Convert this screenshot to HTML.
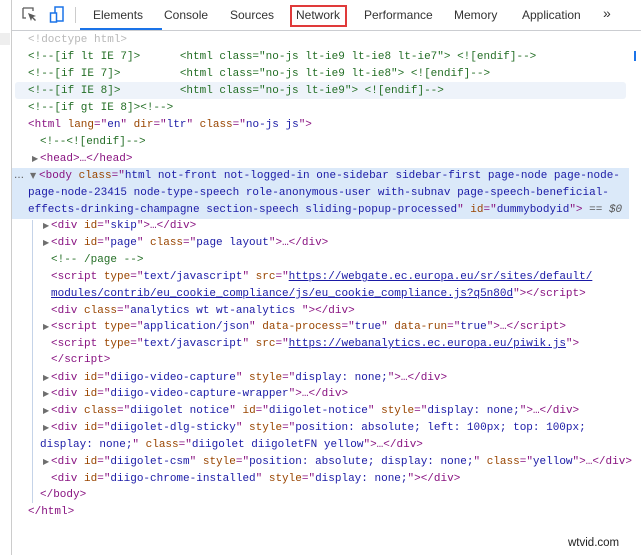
<!DOCTYPE html>
<html><head><style>
body{margin:0;width:641px;height:555px;background:#fff;overflow:hidden;position:relative;font-family:"Liberation Sans",sans-serif}
#lb{position:absolute;left:11px;top:0;width:1px;height:555px;background:#ccc}
#tb{position:absolute;left:12px;top:0;right:0;height:30px;border-bottom:1px solid #cbcdd1;background:#fff}
.tab{position:absolute;top:8px;font-size:12px;color:#333}
.l{position:absolute;white-space:pre;font-family:"Liberation Mono",monospace;font-size:11px;line-height:16px;height:17px;color:#881280}
.a{color:#994500}.v{color:#1a1aa6}.c{color:#236e25}.g{color:#b8b8b8}.u{color:#1a1aa6;text-decoration:underline}
.ar{position:absolute;font-size:8px;color:#6e6e6e;font-family:"DejaVu Sans",sans-serif;line-height:16px}
</style></head><body>
<div id="lb"></div>
<div style="position:absolute;left:0;top:33px;width:10px;height:12px;background:#eee"></div>
<div id="tb">
<svg style="position:absolute;left:10px;top:7px" width="16" height="16" viewBox="0 0 16 16"><path d="M1 1h10v3M1 1v10h3" fill="none" stroke="#5a5a5a" stroke-width="1.3"/><path d="M6 6l8 3-3 1 3 3-1 1-3-3-1 3z" fill="#5a5a5a"/></svg>
<svg style="position:absolute;left:37px;top:5px" width="16" height="20" viewBox="0 0 16 20"><rect x="6" y="2" width="8" height="14" fill="none" stroke="#1a73e8" stroke-width="1.5"/><rect x="1.5" y="8" width="6" height="9" fill="#fff" stroke="#1a73e8" stroke-width="1.5"/></svg>
<div style="position:absolute;left:63px;top:7px;width:1px;height:16px;background:#ccc"></div>
<div class="tab" style="left:81px">Elements</div>
<div style="position:absolute;left:68px;top:28px;width:82px;height:2px;background:#1a73e8"></div>
<div class="tab" style="left:152px">Console</div>
<div class="tab" style="left:218px">Sources</div>
<div style="position:absolute;left:278px;top:5px;width:57px;height:22px;border:2px solid #e03a3a;box-sizing:border-box"></div>
<div class="tab" style="left:284px">Network</div>
<div class="tab" style="left:352px">Performance</div>
<div class="tab" style="left:442px">Memory</div>
<div class="tab" style="left:510px">Application</div>
<div class="tab" style="left:591px;font-size:14px;top:5px">»</div>
</div>
<div style="position:absolute;left:15px;top:82px;width:611px;height:17px;background:#eef3fa;border-radius:3px"></div>
<div style="position:absolute;left:12px;top:168px;width:617px;height:51px;background:#dbe9f9"></div>
<div style="position:absolute;left:32px;top:220px;width:1px;height:283px;background:#c5d3e8"></div>
<div style="position:absolute;left:634px;top:51px;width:2px;height:10px;background:#1a73e8"></div>
<div class="l g" style="left:28px;top:32px">&lt;!doctype html&gt;</div>
<div class="l c" style="left:28px;top:49px">&lt;!--[if lt IE 7]&gt;      &lt;html class="no-js lt-ie9 lt-ie8 lt-ie7"&gt; &lt;![endif]--&gt;</div>
<div class="l c" style="left:28px;top:66px">&lt;!--[if IE 7]&gt;         &lt;html class="no-js lt-ie9 lt-ie8"&gt; &lt;![endif]--&gt;</div>
<div class="l c" style="left:28px;top:83px">&lt;!--[if IE 8]&gt;         &lt;html class="no-js lt-ie9"&gt; &lt;![endif]--&gt;</div>
<div class="l c" style="left:28px;top:100px">&lt;!--[if gt IE 8]&gt;&lt;!--&gt;</div>
<div class="l" style="left:28px;top:117px">&lt;html <span class="a">lang</span>="<span class="v">en</span>" <span class="a">dir</span>="<span class="v">ltr</span>" <span class="a">class</span>="<span class="v">no-js js</span>"&gt;</div>
<div class="l c" style="left:40px;top:134px">&lt;!--&lt;![endif]--&gt;</div>
<div class="ar" style="left:32px;top:151px">▶</div>
<div class="l" style="left:40px;top:151px">&lt;head&gt;…&lt;/head&gt;</div>
<div class="ar" style="left:14px;top:168px;font-size:10px;color:#555">…</div>
<div class="ar" style="left:30px;top:168px">▼</div>
<div class="l" style="left:39px;top:168px">&lt;body <span class="a">class</span>="<span class="v">html not-front not-logged-in one-sidebar sidebar-first page-node page-node-</span></div>
<div class="l v" style="left:28px;top:185px">page-node-23415 node-type-speech role-anonymous-user with-subnav page-speech-beneficial-</div>
<div class="l" style="left:28px;top:202px"><span class="v">effects-drinking-champagne section-speech sliding-popup-processed</span>" <span class="a">id</span>="<span class="v">dummybodyid</span>"&gt; <span style="color:#555">== <i>$0</i></span></div>
<div class="ar" style="left:43px;top:218px">▶</div>
<div class="l" style="left:51px;top:218px">&lt;div <span class="a">id</span>="<span class="v">skip</span>"&gt;…&lt;/div&gt;</div>
<div class="ar" style="left:43px;top:235px">▶</div>
<div class="l" style="left:51px;top:235px">&lt;div <span class="a">id</span>="<span class="v">page</span>" <span class="a">class</span>="<span class="v">page layout</span>"&gt;…&lt;/div&gt;</div>
<div class="l c" style="left:51px;top:252px">&lt;!-- /page --&gt;</div>
<div class="l" style="left:51px;top:269px">&lt;script <span class="a">type</span>="<span class="v">text/javascript</span>" <span class="a">src</span>="<span class="u">https://webgate.ec.europa.eu/sr/sites/default/</span></div>
<div class="l" style="left:51px;top:286px"><span class="u">modules/contrib/eu_cookie_compliance/js/eu_cookie_compliance.js?q5n80d</span>"&gt;&lt;/script&gt;</div>
<div class="l" style="left:51px;top:303px">&lt;div <span class="a">class</span>="<span class="v">analytics wt wt-analytics </span>"&gt;&lt;/div&gt;</div>
<div class="ar" style="left:43px;top:319px">▶</div>
<div class="l" style="left:51px;top:319px">&lt;script <span class="a">type</span>="<span class="v">application/json</span>" <span class="a">data-process</span>="<span class="v">true</span>" <span class="a">data-run</span>="<span class="v">true</span>"&gt;…&lt;/script&gt;</div>
<div class="l" style="left:51px;top:336px">&lt;script <span class="a">type</span>="<span class="v">text/javascript</span>" <span class="a">src</span>="<span class="u">https://webanalytics.ec.europa.eu/piwik.js</span>"&gt;</div>
<div class="l" style="left:51px;top:352px">&lt;/script&gt;</div>
<div class="ar" style="left:43px;top:370px">▶</div>
<div class="l" style="left:51px;top:370px">&lt;div <span class="a">id</span>="<span class="v">diigo-video-capture</span>" <span class="a">style</span>="<span class="v">display: none;</span>"&gt;…&lt;/div&gt;</div>
<div class="ar" style="left:43px;top:386px">▶</div>
<div class="l" style="left:51px;top:386px">&lt;div <span class="a">id</span>="<span class="v">diigo-video-capture-wrapper</span>"&gt;…&lt;/div&gt;</div>
<div class="ar" style="left:43px;top:403px">▶</div>
<div class="l" style="left:51px;top:403px">&lt;div <span class="a">class</span>="<span class="v">diigolet notice</span>" <span class="a">id</span>="<span class="v">diigolet-notice</span>" <span class="a">style</span>="<span class="v">display: none;</span>"&gt;…&lt;/div&gt;</div>
<div class="ar" style="left:43px;top:420px">▶</div>
<div class="l" style="left:51px;top:420px">&lt;div <span class="a">id</span>="<span class="v">diigolet-dlg-sticky</span>" <span class="a">style</span>="<span class="v">position: absolute; left: 100px; top: 100px;</span></div>
<div class="l" style="left:40px;top:437px"><span class="v">display: none;</span>" <span class="a">class</span>="<span class="v">diigolet diigoletFN yellow</span>"&gt;…&lt;/div&gt;</div>
<div class="ar" style="left:43px;top:454px">▶</div>
<div class="l" style="left:51px;top:454px">&lt;div <span class="a">id</span>="<span class="v">diigolet-csm</span>" <span class="a">style</span>="<span class="v">position: absolute; display: none;</span>" <span class="a">class</span>="<span class="v">yellow</span>"&gt;…&lt;/div&gt;</div>
<div class="l" style="left:51px;top:471px">&lt;div <span class="a">id</span>="<span class="v">diigo-chrome-installed</span>" <span class="a">style</span>="<span class="v">display: none;</span>"&gt;&lt;/div&gt;</div>
<div class="l" style="left:40px;top:487px">&lt;/body&gt;</div>
<div class="l" style="left:28px;top:504px">&lt;/html&gt;</div>
<div style="position:absolute;left:568px;top:537px;font-size:11.5px;color:#222;font-family:'Liberation Sans',sans-serif">wtvid.com</div>
</body></html>
